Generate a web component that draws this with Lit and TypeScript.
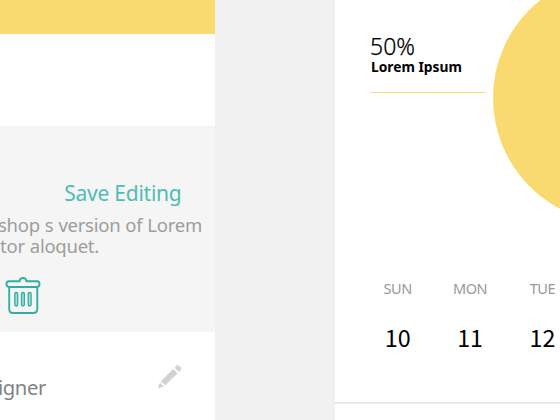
import { LitElement, html, css, svg } from "lit";
import { customElement, property } from "lit/decorators.js";

@customElement("day-cell")
class DayCell extends LitElement {
  @property() name = "";
  @property() day = "";

  static styles = css`
    :host { display: flex; flex-direction: column; align-items: center; width: 72.4px; flex: none; }
    .name { font: 14.5px/20px "Noto Sans", sans-serif; color: #9b9797; letter-spacing: -0.4px; }
    .day { margin-top: 23px; font: 23.3px/32px "Noto Sans CJK SC", sans-serif; color: #000; }
  `;

  render() {
    return html`<div class="name">${this.name}</div><div class="day">${this.day}</div>`;
  }
}

@customElement("app-root")
class AppRoot extends LitElement {
  static styles = css`
    :host { display: flex; width: 560px; height: 420px; overflow: hidden; background: #f1f1f1; font-family: "Noto Sans", sans-serif; }
    * { box-sizing: border-box; }
    .left { width: 215px; height: 420px; flex: none; background: #fff; overflow: hidden; white-space: nowrap; }
    .banner { height: 34px; background: #f9da70; }
    .editor { height: 206px; margin-top: 92px; padding: 54px 13px 0 0; background: #f5f5f5; overflow: hidden; text-align: right; }
    .save { font-size: 21px; line-height: 26px; letter-spacing: -0.25px; color: #4dbdb5; padding-right: 20.5px; }
    .copy { display: flex; justify-content: flex-end; margin-top: 8px; font-size: 18.5px; line-height: 21px; letter-spacing: -0.25px; word-spacing: 0.4px; color: #9d9d9d; }
    .copy.second { margin-top: 0; padding-right: 103px; }
    .trash { display: block; width: 38px; height: 40px; margin: 19px 0 0 4px; }
    .role { display: flex; align-items: flex-start; padding-top: 32px; }
    .job { width: 46px; display: flex; justify-content: flex-end; margin-top: 10px; font-size: 20.3px; line-height: 26px; letter-spacing: -0.4px; color: #838383; }
    .pencil { width: 26px; height: 26px; margin-left: 111px; }
    .right { position: relative; width: 225px; height: 420px; margin-left: 120px; background: #fff; overflow: hidden; display: flex; flex-direction: column; }
    .disc { position: absolute; left: 158px; top: -27px; width: 250px; height: 250px; border-radius: 50%; background: #f9da70; }
    .stat { width: 115px; margin-left: 36px; padding-top: 32px; height: 93px; border-bottom: 1px solid #f9da70; flex: none; color: #000; }
    .percent { margin-left: -1px; font-size: 23px; line-height: 28px; font-weight: 300; -webkit-text-stroke: 0.25px #000; }
    .label { font-size: 13.8px; line-height: 14px; font-weight: 700; white-space: nowrap; }
    .days { display: flex; margin: 185px 0 0 26.5px; }
    .rule { height: 2px; background: #e7e7e7; margin-top: 49px; flex: none; }
  `;

  private trash() {
    return svg`<svg class="trash" viewBox="4 275 38 40" fill="none" stroke="#31aea6" stroke-width="1.9">
      <path d="M19.500 281.300 Q20 278 23 278 Q26 278 26.500 281.300 H37 Q39.500 281.500 39.500 284 Q39.500 286.700 37 287 H9 Q6.400 286.700 6.400 284 Q6.400 281.500 9 281.300 Z"/>
      <path d="M9.200 287 V309 Q9.200 313 13.200 313 H33.300 Q37.300 313 37.300 309 V287"/>
      <g fill="#a5dcd7" stroke-width="1.300">
        <rect x="14.800" y="292.500" width="2.900" height="13.500" rx="1.450"/>
        <rect x="21.500" y="292.500" width="2.900" height="13.500" rx="1.450"/>
        <rect x="28.200" y="292.500" width="2.900" height="13.500" rx="1.450"/>
      </g>
    </svg>`;
  }

  private pencil() {
    return svg`<svg class="pencil" viewBox="157 364 26 26" fill="#d2d2d2">
      <path d="M173.200 369 L177.600 373.300 L165.200 385.500 L160.800 381.200 Z"/>
      <path d="M174.500 367.700 L176.500 365.700 Q177.800 364.500 179.100 365.800 L180.800 367.500 Q182.100 368.800 180.900 370.100 L178.900 372.100 Z"/>
      <path d="M160 382.500 L163.800 386.400 L157.800 388.500 Z"/>
    </svg>`;
  }

  render() {
    return html`
      <section class="left">
        <div class="banner"></div>
        <div class="editor">
          <div class="save">Save Editing</div>
          <div class="copy"><span>shop s version of Lorem</span></div>
          <div class="copy second"><span>tor aloquet.</span></div>
          ${this.trash()}
        </div>
        <div class="role">
          <div class="job"><span>igner</span></div>
          ${this.pencil()}
        </div>
      </section>
      <section class="right">
        <div class="disc"></div>
        <div class="stat">
          <div class="percent">50%</div>
          <div class="label">Lorem Ipsum</div>
        </div>
        <div class="days">
          <day-cell name="SUN" day="10"></day-cell>
          <day-cell name="MON" day="11"></day-cell>
          <day-cell name="TUE" day="12"></day-cell>
        </div>
        <div class="rule"></div>
      </section>
    `;
  }
}
